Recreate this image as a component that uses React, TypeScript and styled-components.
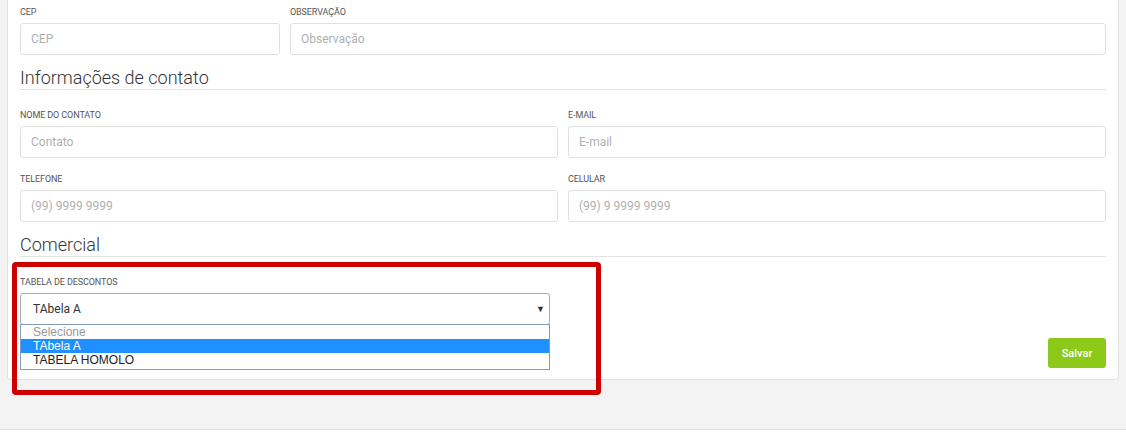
import React from 'react';
import styled, { createGlobalStyle } from 'styled-components';

const Global = createGlobalStyle`
    html, body {
        margin: 0;
        padding: 0;
        background: #f3f3f3;
        font-family: Roboto, "Liberation Sans", Arial, sans-serif;
    }
    * { box-sizing: border-box; }
`;

const Page = styled.div`
    width: 1126px;
    height: 444px;
    display: flex;
    flex-direction: column;
    overflow: hidden;
    position: relative;
`;

const Card = styled.div`
    display: flex;
    flex-direction: column;
    margin: 0 7px 0 7px;
    background: #fff;
    border: 1px solid #e2e2e2;
    border-top: none;
    border-radius: 0 0 4px 4px;
    padding: 6px 12px 11px 12px;
    position: relative;
`;

const Row = styled.div<{ cols: string }>`
    display: grid;
    grid-template-columns: ${p => p.cols};
    column-gap: 10px;
    margin-bottom: 13px;

    & + & {
        margin-top: 2px;
    }
`;

const Field = styled.div`
    display: flex;
    flex-direction: column;
    position: relative;
`;

const Label = styled.label`
    font-size: 9px;
    line-height: 12px;
    color: #555;
    text-transform: uppercase;
    margin-bottom: 5px;
    letter-spacing: -0.1px;
`;

const Input = styled.input`
    height: 32px;
    border: 1px solid #e0e0e0;
    border-radius: 3px;
    padding: 0 10px;
    font-family: Roboto, "Liberation Sans", Arial, sans-serif;
    font-size: 12px;
    color: #333;
    outline: none;
    &::placeholder { color: #b0b0b0; }
`;

const Heading = styled.h3`
    font-family: Roboto, "Liberation Sans", Arial, sans-serif;
    font-weight: 300;
    font-size: 18px;
    line-height: 20px;
    color: #333;
    margin: 0 0 19px 0;
    padding-bottom: 1px;
    border-bottom: 1px solid #e3e3e3;
`;

const SelectBox = styled.div`
    width: 530px;
    height: 32px;
    border: 1px solid #aaa;
    border-radius: 3px;
    display: flex;
    align-items: center;
    justify-content: space-between;
    padding: 0 4px 0 12px;
    font-size: 12px;
    color: #333;
`;

const Arrow = styled.span`
    font-size: 9px;
    color: #333;
`;

const OptionList = styled.ul`
    position: absolute;
    top: 48px;
    left: 0;
    width: 530px;
    margin: 0;
    padding: 0 0 2px 0;
    list-style: none;
    background: #fff;
    border: 1px solid #7f9db9;
    z-index: 2;
`;

const Option = styled.li<{ active?: boolean; muted?: boolean }>`
    font-family: "Liberation Sans", Arial, sans-serif;
    font-size: 12px;
    line-height: 14px;
    height: 14px;
    padding: 0 12px;
    background: ${p => (p.active ? '#1e90ff' : 'transparent')};
    color: ${p => (p.active ? '#fff' : p.muted ? '#999' : '#222')};
`;

const Actions = styled.div`
    display: flex;
    justify-content: flex-end;
    margin-top: 13px;
`;

const SaveButton = styled.button`
    width: 58px;
    height: 30px;
    border: none;
    border-radius: 3px;
    background: #8cc919;
    color: #fff;
    font-family: Roboto, "Liberation Sans", Arial, sans-serif;
    font-size: 11px;
    font-weight: 500;
`;

const Highlight = styled.div`
    position: absolute;
    left: 12px;
    top: 262px;
    width: 589px;
    height: 133px;
    border: 5px solid #cc0000;
    border-radius: 4px;
    pointer-events: none;
    z-index: 3;
`;

const Spacer = styled.div`
    flex: 1;
`;

const Footer = styled.div`
    height: 15px;
    background: #fff;
    border-top: 1px solid #e2e2e2;
`;

export default function App() {
    return (
        <Page>
            <Global />
            <Card>
                <Row cols="260px 1fr">
                    <Field>
                        <Label>CEP</Label>
                        <Input placeholder="CEP" />
                    </Field>
                    <Field>
                        <Label>Observação</Label>
                        <Input placeholder="Observação" />
                    </Field>
                </Row>

                <Heading>Informações de contato</Heading>
                <Row cols="1fr 1fr">
                    <Field>
                        <Label>Nome do contato</Label>
                        <Input placeholder="Contato" />
                    </Field>
                    <Field>
                        <Label>E-mail</Label>
                        <Input placeholder="E-mail" />
                    </Field>
                </Row>
                <Row cols="1fr 1fr">
                    <Field>
                        <Label>Telefone</Label>
                        <Input placeholder="(99) 9999 9999" />
                    </Field>
                    <Field>
                        <Label>Celular</Label>
                        <Input placeholder="(99) 9 9999 9999" />
                    </Field>
                </Row>

                <Heading>Comercial</Heading>
                <Field>
                    <Label>Tabela de descontos</Label>
                    <SelectBox>
                        <span>TAbela A</span>
                        <Arrow>▼</Arrow>
                    </SelectBox>
                    <OptionList>
                        <Option muted>Selecione</Option>
                        <Option active>TAbela A</Option>
                        <Option>TABELA HOMOLO</Option>
                    </OptionList>
                </Field>
                <Actions>
                    <SaveButton>Salvar</SaveButton>
                </Actions>
            </Card>
            <Highlight />
            <Spacer />
            <Footer />
        </Page>
    );
}
